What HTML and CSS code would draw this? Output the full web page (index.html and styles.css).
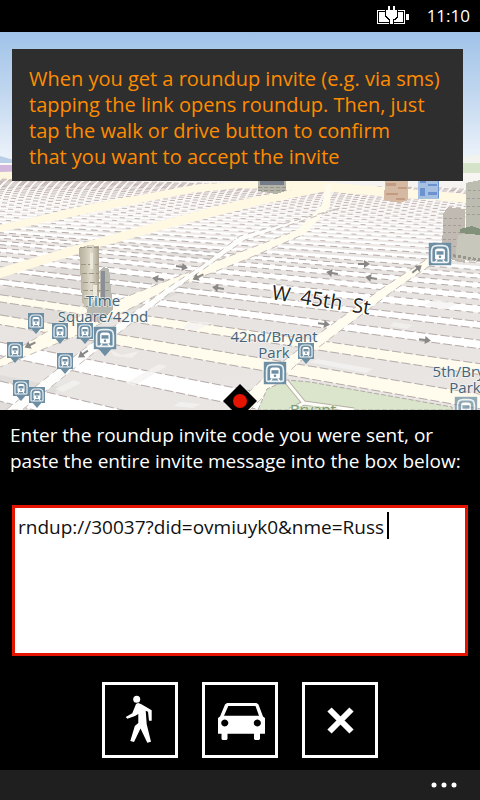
FILE: index.html
```html
<!DOCTYPE html>
<html lang="en">
<head>
<meta charset="utf-8">
<meta name="viewport" content="width=device-width, initial-scale=1">
<title>roundup</title>
<link rel="stylesheet" href="styles.css">
</head>
<body>
<header class="status">
  <svg class="battery" width="32" height="20" viewBox="0 0 32 20" shape-rendering="crispEdges" role="img" aria-label="Charging">
    <path d="M0 4h28v14H0zM29 8h3v6h-3z" fill="#fff"/>
    <path d="M1 5h26v12H1z" fill="#000"/>
    <path d="M2 6h24v10H2z" fill="#fff"/>
    <path d="M8 4h13v7l-3 3h-1v4h-5v-4h-1l-3-3z" fill="#000"/>
    <path d="M11 0h2v4h3V0h2v4h2v6l-3 3h-1v5h-3v-5h-1l-3-3V4h2z" fill="#fff"/>
  </svg>
  <time>11:10</time>
</header>
<main class="page">
  <section class="map">
    <svg class="scene" viewBox="0 32 480 378" preserveAspectRatio="xMidYMid slice" role="img" aria-label="Map of midtown">
      <defs>
        <linearGradient id="sky" x1="0" y1="0" x2="0" y2="1">
          <stop offset="0" stop-color="#a0c3e8"/><stop offset=".45" stop-color="#c0d6ef"/><stop offset="1" stop-color="#f0f5fb"/>
        </linearGradient>
        <linearGradient id="land" x1="0" y1="0" x2="0" y2="1">
          <stop offset="0" stop-color="#faf8f5"/><stop offset=".18" stop-color="#f1eeec"/><stop offset=".45" stop-color="#e7e3e1"/><stop offset="1" stop-color="#e9e6e4"/>
        </linearGradient>
        <linearGradient id="tower" x1="0" y1="0" x2="1" y2="0">
          <stop offset="0" stop-color="#b5ae9c"/><stop offset=".35" stop-color="#cbc5b4"/><stop offset=".6" stop-color="#e1dccd"/><stop offset="1" stop-color="#aaa391"/>
        </linearGradient>
        <g id="train">
          <rect x="-8" y="-8" width="16" height="16" fill="#6d8ea3"/>
          <path d="M-6 5v-7q0-4 4-4h4q4 0 4 4v7q0 1-1 1h-10q-1 0-1-1z" fill="none" stroke="#e9f1f5" stroke-width="1.2"/>
          <path d="M-3.500-2q0-2 2-2h3q2 0 2 2v5q0 1-1 1h-5q-1 0-1-1z" fill="#fff"/>
          <path d="M-2.500-2h5v2.500h-5z" fill="#6d8ea3"/><circle cy="2" r=".9" fill="#6d8ea3"/>
          <path d="M-2 4l-1.500 2M2 4l1.500 2" stroke="#fff"/>
        </g>
        <g id="pin"><path d="M-6 6h12l-6 7z" fill="#6d8ea3"/><use href="#train"/></g>
        <path id="arrow" d="M-6-1h6v-3l6 4-6 4V1h-6z" fill="#8a8886"/>
      </defs>
      <rect y="32" width="480" height="132" fill="url(#sky)"/>
      <path d="M0 156l14 4v6H0z" fill="#b9cfe7"/>
      <rect y="163" width="480" height="247" fill="url(#land)"/>
      <path d="M0 165h14v7H0z" fill="#d1b7dc"/>
      <path d="M0 172l30-1v10H0z" fill="#fdf6de"/>
      <path d="M462 157l18-3v11h-18z" fill="#f0f3ee"/>
      <path d="M462 163h18v10h-18z" fill="#d5e4c9"/>
      <g fill="#dcd8d5" opacity=".7">
        <path d="M0 290L75 262 140 272 200 285 150 305 60 330 0 320zM185 245l45 6-20 12-50-6zM0 375l60 12-20 23H0z"/>
      </g>
      <g id="streets"></g>
      <g fill="#fefaf0" stroke="#c5bbb6" stroke-dasharray="7 5">
        <path d="M0 225L95 203 200 184 300 180 480 195V204L330 192 240 188 190 193 95 212 0 232z" fill="#fff8e2" stroke="none"/>
        <path d="M0 268L100 238 175 217 245 199 330 183V190L255 206 180 225 100 247 0 278z" fill="#fff8e2" stroke="none"/>
        <path d="M0 359L60 324 133 294 240 252 297 230 322 205 326 185H331L330 207 305 234 245 260 165 291 80 334 0 367z" fill="#fffcee" stroke="none"/>
        <path d="M0 359L60 324 133 294 240 252 290 233M300 236L245 260 165 291 80 334 0 367" fill="none"/>
        <path d="M230 410L272 370 320 333 381 289 430 257 480 220V229L438 260 393 291 340 331 298 363 250 410z" fill="#fffcf0"/>
        <path d="M6 410L60 367 116 325 166 289 205 263 240 236 340 208 245 240 208 266 170 293 124 329 76 367 22 410z" fill="#fdfdfb"/>
      </g>
      <g>
        <path d="M258 410L267 389 287 380 310 382 452 407V410z" fill="#dae5cb" stroke="#b3aaa6" stroke-dasharray="5 2"/>
        <path d="M286 381L304 403 354 410M304 403L290 410" fill="none" stroke="#b7b0a6" stroke-width="5"/>
        <path d="M286 381L304 403 354 410M304 403L290 410" fill="none" stroke="#fffdf8" stroke-width="3"/>
      </g>
      <g fill="#f4f3f1" opacity=".75">
        <path d="M110 350l12 5 17-4-7 7-18-2zM126 383l33-19 8 2-33 20zM190 321l22 2-17 8-12-3zM318 359l55 10-7 4-57-11zM394 322l18 3-5 4-17-3zM435 299l22 5-13 6-19-5zM55 389l19-9 7 3-18 9zM180 402l21 2-8 4-20-2z"/>
      </g>
      <g>
        <use href="#arrow" transform="translate(182 267) rotate(10)"/>
        <use href="#arrow" transform="translate(158 279) rotate(190)"/>
        <use href="#arrow" transform="translate(198 277) rotate(155)"/>
        <use href="#arrow" transform="translate(218 288) rotate(190)"/>
        <use href="#arrow" transform="translate(364 264)"/>
        <use href="#arrow" transform="translate(332 273) rotate(190)"/>
        <use href="#arrow" transform="translate(371 278) rotate(190)"/>
        <use href="#arrow" transform="translate(417 269) rotate(-38)"/>
        <use href="#arrow" transform="translate(324 324) rotate(8)"/>
        <use href="#arrow" transform="translate(425 340) rotate(8)"/>
        <use href="#arrow" transform="translate(30 345) rotate(155)"/>
        <use href="#arrow" transform="translate(83 354) rotate(145)"/>
      </g>
      <g shape-rendering="crispEdges">
        <path d="M258 180h28v11l-10 3-18-3z" fill="#b4b3a8"/>
        <path d="M260 180h24v5h-24z" fill="#747c89"/>
        <path d="M258 187h28M258 190h27" stroke="#95958c" stroke-dasharray="4 2"/>
        <path d="M385 180h23v20l-8 3-16-3z" fill="#d6b9a3"/>
        <path d="M386 183h10v3h-10zM398 187h9v2h-9zM386 193h12v2h-12zM396 198h9v2h-9z" fill="#c19c83"/>
        <path d="M418 180h21v19h-21z" fill="#a6c0e2"/>
        <path d="M420 181h6v2h-6zM420 188h5v8h-5zM428 184h9v2h-9zM428 192h9v3h-9zM438 180h1v18h-1z" fill="#6c92d0"/>
        <path d="M443 214l5-7 17 2v54l-23-6z" fill="#c1bab2"/>
        <path d="M466 183l14-3v50h-14z" fill="#bdbcb1"/>
        <path d="M444 218h20M443 225h20M443 232h20M443 239h20M443 246h20M468 190h12M467 198h13M467 206h13M467 214h13" stroke="#a49e98" stroke-dasharray="3 2"/>
        <path d="M458 235l22-3v30l-25-3z" fill="#c8c7bb"/>
        <path d="M460 229l12-3 8 3v6l-20-2z" fill="#81917a"/>
        <path d="M443 254l37 6" stroke="#99968e" stroke-width="3" stroke-dasharray="3 2"/>
        <path d="M79 248l9-3 11 1v60l-9 8-8-12z" fill="url(#tower)"/>
        <path d="M100 270l4-3 5 2 4 40-14 14-13-5 2-12 12-8z" fill="#b8b8b2"/>
        <path d="M101 271h4v29h-4z" fill="#8a8f96"/>
        <path d="M80 247h18M81 264l17 1M82 273h17M83 282h26M83 290h27M84 298h26M86 306h24M90 314h18" stroke="#9c9688" stroke-dasharray="5 2"/>
        <path d="M90 253h3v16h-3zM93 285h4v15h-4z" fill="#ece8dc"/>
      </g>
      <g>
        <use href="#pin" x="36" y="321"/><use href="#pin" x="60" y="331"/><use href="#pin" x="85" y="331"/>
        <use href="#pin" x="15" y="350"/><use href="#pin" x="65" y="361"/><use href="#pin" x="21" y="388"/>
        <use href="#pin" x="37" y="395"/><use href="#pin" x="306" y="351"/>
        <use href="#pin" transform="translate(105 338) scale(1.400)"/>
        <use href="#train" transform="translate(275 373) scale(1.400)"/>
        <use href="#train" transform="translate(440 254) scale(1.400)"/>
        <use href="#train" transform="translate(466 408) scale(1.400)" opacity=".75"/>
      </g>
      <g class="place">
        <text x="103" y="306">Time</text><text x="103" y="322">Square/42nd</text>
        <text x="274" y="342">42nd/Bryant</text><text x="274" y="358">Park</text>
        <text x="470" y="377">5th/Bryant</text><text x="465" y="393">Park</text>
        <text class="green" x="313" y="415">Bryant</text>
      </g>
      <text class="road" transform="translate(271 299) rotate(9)" xml:space="preserve">W  45th  St</text>
      <path d="M240 384l17 17-17 17-17-17z" fill="#000"/><circle cx="240" cy="401" r="7" fill="#e51400"/>
    </svg>
    <p class="tip">When you get a roundup invite (e.g. via sms)<br>tapping the link opens roundup. Then, just<br>tap the walk or drive button to confirm<br>that you want to accept the invite</p>
  </section>
  <form class="invite">
    <label for="code">Enter the roundup invite code you were sent, or paste the entire invite message into the box below:</label>
    <div class="field">
      <textarea id="code" spellcheck="false">rndup://30037?did=ovmiuyk0&amp;nme=Russ</textarea>
      <span class="caret"></span>
    </div>
    <div class="actions">
      <button type="button" aria-label="Walk">
        <svg width="70" height="70" viewBox="0 0 70 70" fill="#fff"><circle cx="31.700" cy="14.300" r="3.500"/><path d="M31 19l2-1 3 1 9 5.300 1.700 1v10.500H44l-1-9-2.300-1 1 13.500L46 56.700l-3.700 1L35.500 43.500 29 57l-3.700-1 4.500-15 3.500-3v-9l-3.300 2-7.700 2.700-1.600-1.700 6.600-3.700z"/></svg>
      </button>
      <button type="button" aria-label="Drive">
        <svg width="70" height="70" viewBox="0 0 70 70" fill="#fff" fill-rule="evenodd"><path d="M22 18h29.500l2 1.500 4.500 12 2 1.500v15.700h-5V54l-1 1h-4l-1-1v-5.300H22.500V54l-1 1h-4l-1-1v-5.300H13V33l2-1.500 5-12zM23.300 21l-4.300 9.700h35L50.500 21zM19.700 34.500a3.500 3.500 0 1 0 .1 0zM52.300 34.500a3.500 3.500 0 1 0 .1 0z"/></svg>
      </button>
      <button type="button" aria-label="Cancel">
        <svg width="70" height="70" viewBox="0 0 70 70"><path d="M24.500 24.500l22 22M46.500 24.500l-22 22" stroke="#fff" stroke-width="6"/></svg>
      </button>
    </div>
  </form>
</main>
<footer class="appbar">
  <button type="button" aria-label="More"><svg width="26" height="6" viewBox="0 0 26 6" fill="#fff"><circle cx="3" cy="3" r="2.500"/><circle cx="13" cy="3" r="2.500"/><circle cx="23" cy="3" r="2.500"/></svg></button>
</footer>
<script src="map.js"></script>
</body>
</html>
```
FILE: styles.css
```css
* { box-sizing: border-box; }
body {
  margin: 0;
  min-height: 100vh;
  display: flex;
  flex-direction: column;
  background: #000;
  color: #fff;
  font-family: "Open Sans", "Noto Sans", sans-serif;
  font-size: 19px;
  line-height: 26px;
}
.status {
  height: 32px;
  padding: 0 10px;
  display: flex;
  align-items: center;
  justify-content: flex-end;
  gap: 18px;
  font-size: 17px;
}
.page { flex: 1; display: flex; flex-direction: column; }
.map {
  flex: 1;
  position: relative;
  min-height: 200px;
  padding: 17px 17px 0 12px;
  overflow: hidden;
}
.scene { position: absolute; inset: 0; width: 100%; height: 100%; }
.tip {
  position: relative;
  margin: 0;
  padding: 17px 8px 11px 17px;
  background: #2e2e2e;
  color: #ff8c00;
  font-size: 20px;
}
.place {
  font-size: 15px;
  text-anchor: middle;
  fill: #456478;
  stroke: #f4f4f2;
  stroke-width: 2px;
  stroke-opacity: 0.7;
  paint-order: stroke;
}
.place .green { fill: #7c9874; stroke: #dae5cb; }
.road { font-size: 20px; fill: #222; stroke: #fff; stroke-width: 2px; paint-order: stroke; }
.invite { padding: 12px 12px; }
.invite label { display: block; margin: 0 -4px 0 -2px; }
.field { position: relative; margin-top: 31px; }
.field textarea {
  display: block;
  width: 100%;
  height: 151px;
  padding: 6px 3px;
  border: 3px solid #e51400;
  border-radius: 0;
  outline: 0;
  resize: none;
  background: #fff;
  color: #111;
  font: inherit;
}
.caret { position: absolute; left: 375px; top: 7px; width: 2px; height: 27px; background: #000; }
.actions { display: flex; justify-content: center; gap: 24px; margin-top: 26px; }
.actions button {
  width: 76px;
  height: 76px;
  padding: 0;
  border: 3px solid #fff;
  background: #000;
}
.actions svg { display: block; }
.appbar {
  height: 30px;
  padding: 0 23px;
  display: flex;
  align-items: center;
  justify-content: flex-end;
  background: #1f1f1f;
}
.appbar button { display: flex; padding: 0; border: 0; background: none; }
```
FILE: map.js
```js
// Cross streets recede toward a horizon; each is a band with dashed kerbs.
const HORIZON = 160;
const SLOPE = 0.00085;
const at = (depth, x) => HORIZON + (1 / depth) * (1 + SLOPE * (x - 240));
let bands = '';
for (let n = -2; n < 50; n++) {
  const depth = 0.00422 + 0.00077 * n;
  const half = n < 5 ? 0.00015 : 0.0002;
  const [near, far] = [depth - half, depth + half];
  const fill = n === 1 || n === 2 ? '#fffcee' : '#fff';
  const dash = n < 5 ? '9 3' : n < 12 ? '7 5' : '5 10';
  const kerb = n < 12 ? '#b5aaa7' : '#c4b6b2';
  const line = d => `M0 ${at(d, 0).toFixed(1)}L480 ${at(d, 480).toFixed(1)}`;
  bands += `<path d="${line(far)}V${at(near, 480).toFixed(1)}L0 ${at(near, 0).toFixed(1)}z" fill="${fill}"/>`;
  bands += `<path d="${line(near)}" stroke="${kerb}" stroke-dasharray="${dash}" stroke-dashoffset="${n * 7}"/>`;
  if (n < 9) bands += `<path d="${line(far)}" stroke="${kerb}" stroke-dasharray="${dash}"/>`;
}
document.getElementById('streets').innerHTML = bands;
```
